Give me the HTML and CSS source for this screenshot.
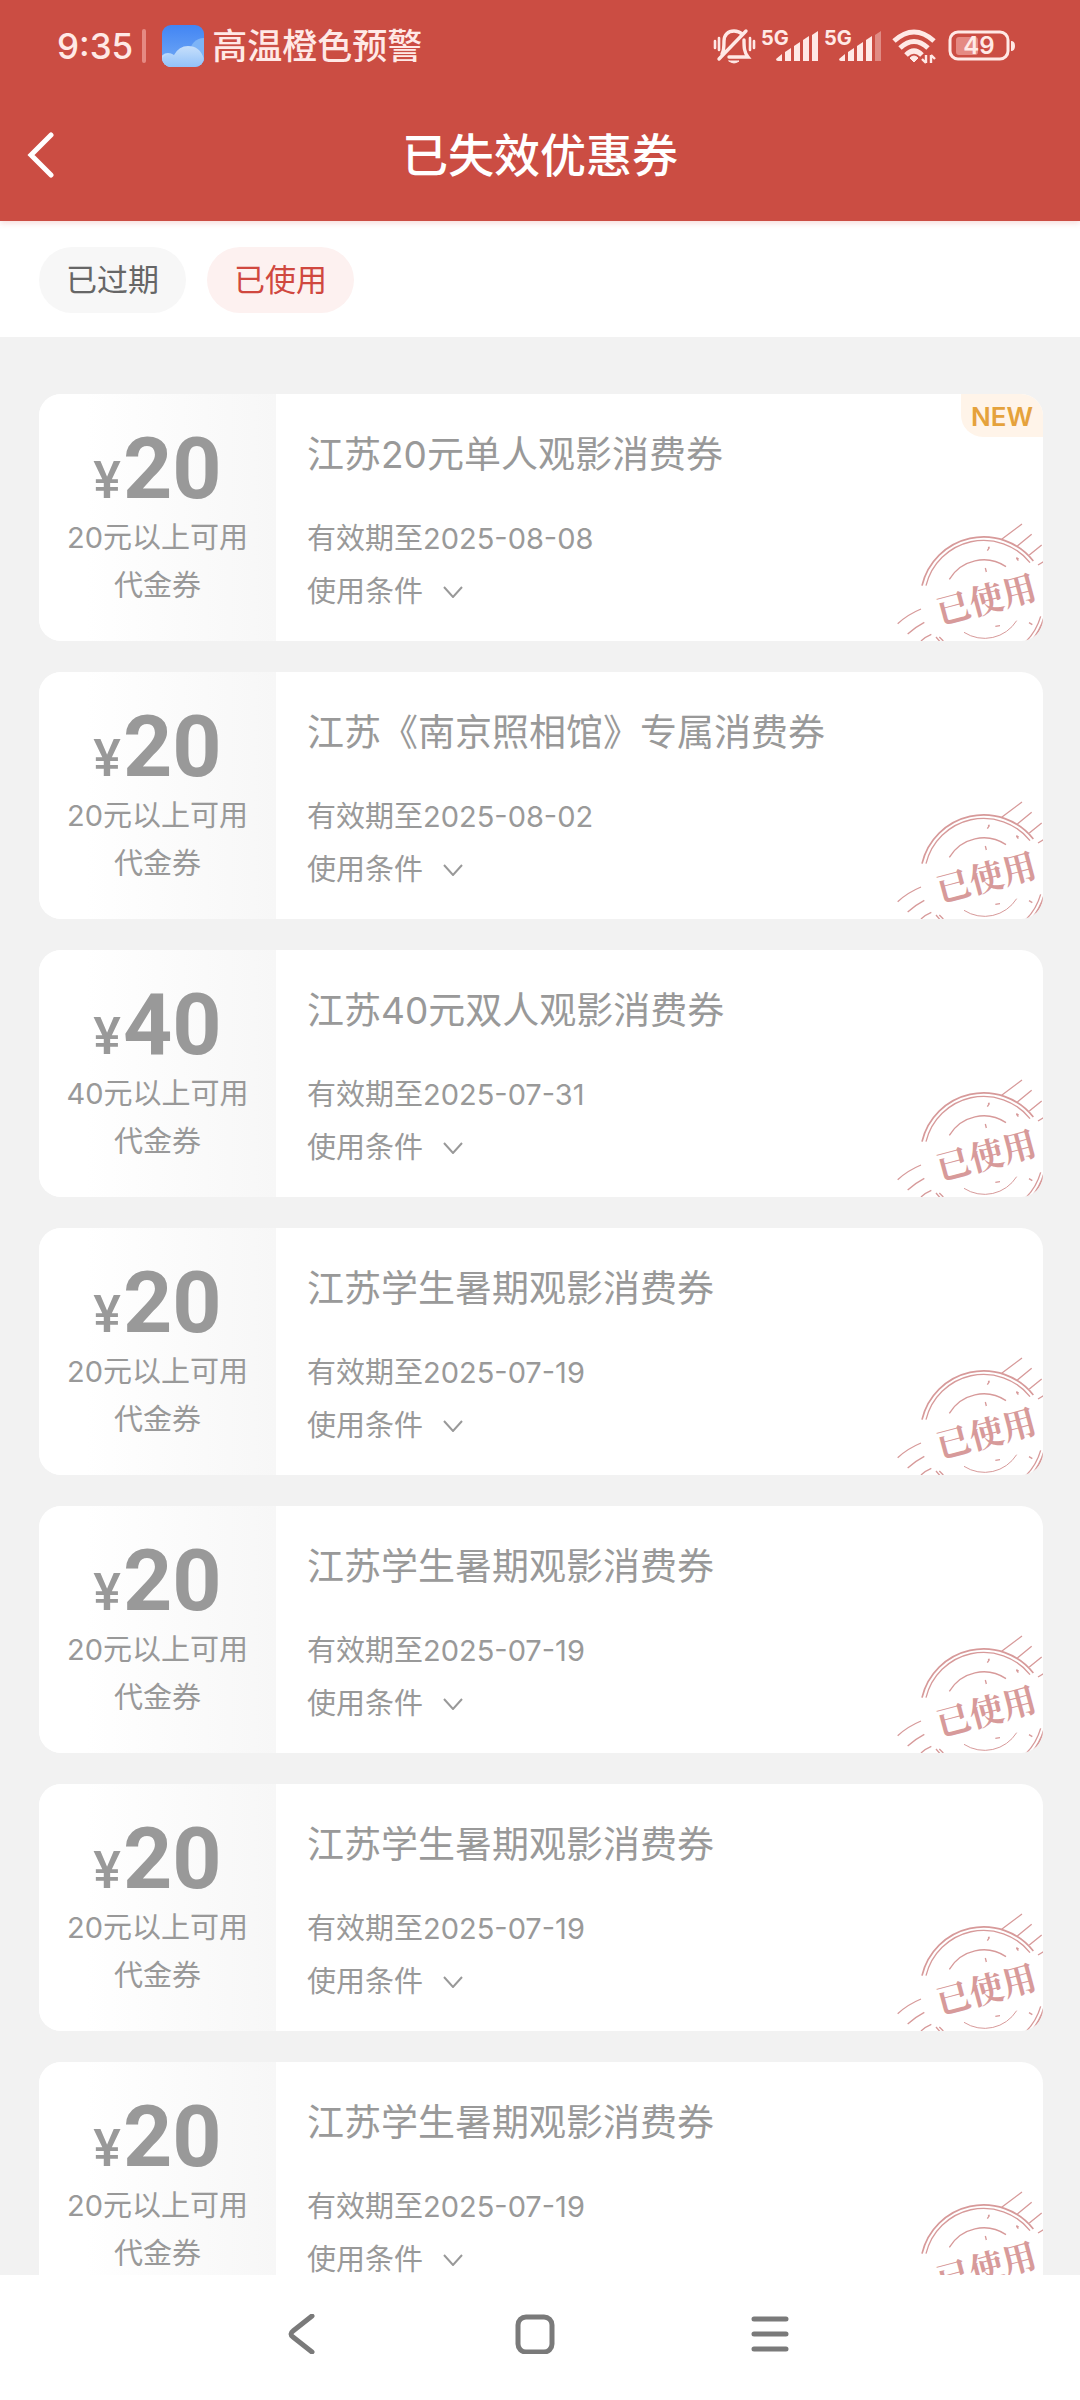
FILE: index.html
```html
<!DOCTYPE html>
<html lang="zh-CN">
<head>
<meta charset="UTF-8">
<meta name="viewport" content="width=device-width, initial-scale=1.0">
<title>已失效优惠券</title>
<link rel="stylesheet" href="styles.css">
</head>
<body>

<!-- 公用图形 -->
<svg class="defs" width="0" height="0" aria-hidden="true">
	<symbol id="down" viewBox="0 0 20 12"><path d="M1 1l9 10 9-10" fill="none" stroke="#999" stroke-width="2"/></symbol>
	<symbol id="stamp" viewBox="0 0 489 423">
		<g fill="none" stroke="#d79a9a" stroke-width="5">
			<path d="M126 257A190 190 0 0 1 460 183"/>
			<path d="M138 257A178 178 0 0 1 450 188" stroke-width="4"/>
			<path d="M494 345A190 190 0 0 1 446 432"/>
			<path d="M482 349A178 178 0 0 1 430 432" stroke-width="4"/>
			<path d="M208 238A120 120 0 0 1 378 200" stroke-width="4"/>
			<path d="M252 397A114 114 0 0 0 410 362" stroke-width="3"/>
			<path d="M365 118l61-46M412 138l43-35M448 165l37-30M474 195l18-11" stroke-width="4"/>
			<path d="M53 371Q84 343 123 327M83 402Q106 381 133 367M123 423Q137 410 154 403" stroke-width="4"/>
			<path d="M168 411l12 14M178 411l12 12M322 152l6-9M324 143l5-2M409 174l6 8M409 173l7 4M316 204l3 12M346 379l14-2M447 368l10 6" stroke-width="4"/>
		</g>
		<text class="stamp-text" x="320" y="336" text-anchor="middle" transform="rotate(-15 320 302)">已使用</text>
	</symbol>
</svg>

<header class="header">
	<div class="status">
		<span class="time">9:35</span>
		<i class="line"></i>
		<svg class="weather" width="42" height="42" viewBox="0 0 42 42">
			<defs>
				<linearGradient id="sky" x1="0" y1="0" x2="0" y2="1"><stop offset="0" stop-color="#4285f4"/><stop offset="1" stop-color="#74abf5"/></linearGradient>
				<linearGradient id="cloud" x1="0" y1="0" x2="0" y2="1"><stop offset="0" stop-color="#c6dffb"/><stop offset="1" stop-color="#93c2f9"/></linearGradient>
				<clipPath id="round"><rect width="42" height="42" rx="9"/></clipPath>
			</defs>
			<g clip-path="url(#round)">
				<rect width="42" height="42" fill="url(#sky)"/>
				<circle cx="42" cy="27" r="14" fill="#7db4f7"/>
				<circle cx="6" cy="36" r="8" fill="#b9d8fb"/>
				<path d="M0 42V33q6-6 12-3 5-9 14-9 12 0 16 13v8z" fill="url(#cloud)"/>
			</g>
		</svg>
		<span class="alert">高温橙色预警</span>
		<span class="icons">
			<svg width="43" height="38" viewBox="0 0 43 38" fill="none" stroke="#ffe9e6" stroke-width="3.4" stroke-linecap="round">
				<path d="M9 27C11 24 11 20 11 14C11 8 15 4 21 4Q26 4 29 7M31 13C31 20 31 25 35 30H16M6 32L33 4"/>
				<path d="M2 14v7M6 11v12M37 11v12M41 14v7" stroke-width="2.6"/>
				<path d="M16 34h10q-5 4-10 0z" fill="#ffe9e6" stroke-width="1"/>
			</svg>
			<svg width="58" height="46" viewBox="0 -6 58 46" fill="#ffe9e6">
				<text class="net" x="0" y="16">5G</text>
				<path d="M15 30l6-5v7h-4q-2 0-2-2zM24 23l6-4v13h-6zM33 17l6-4v19h-6zM42 11l6-4v25h-6zM51 6l6-4v30h-6z"/>
			</svg>
			<svg width="58" height="46" viewBox="0 -6 58 46" fill="#ffe9e6">
				<text class="net" x="0" y="16">5G</text>
				<path d="M15 30l6-5v7h-4q-2 0-2-2zM24 23l6-4v13h-6zM33 17l6-4v19h-6zM42 11l6-4v25h-6z"/>
				<path d="M51 6l6-4v30h-6z" opacity=".4"/>
			</svg>
			<svg class="wifi" width="44" height="36" viewBox="0 0 44 36" fill="none" stroke="#ffe9e6" stroke-width="5">
				<path d="M2 13Q22-5 42 13M8 20Q22 7 36 20M14 27Q22 19 30 27"/>
				<path d="M18 30q4-4 8 0l-4 4z" fill="#ffe9e6" stroke-width="1"/>
				<path d="M34 27v8M39 27v8M30 31l4 4M39 27l4 4" stroke-width="2.4"/>
			</svg>
			<svg class="battery" width="68" height="32" viewBox="0 0 68 32">
				<rect x="8" y="7" width="22" height="18" rx="3" fill="#e58a83"/>
				<rect x="2" y="2" width="58" height="27" rx="8" fill="none" stroke="#ffe9e6" stroke-width="3"/>
				<path d="M63 11q4 0 4 5t-4 5z" fill="#ffe9e6"/>
				<text x="31" y="24" text-anchor="middle">49</text>
			</svg>
		</span>
	</div>
	<div class="title-bar">
		<button class="back" type="button" aria-label="返回">
			<svg width="28" height="46" viewBox="0 0 28 46"><path d="M25 3L5 23l20 20" fill="none" stroke="#fff" stroke-width="5" stroke-linecap="round"/></svg>
		</button>
		<h1>已失效优惠券</h1>
	</div>
</header>

<nav class="tabs">
	<button type="button">已过期</button>
	<button type="button" class="on">已使用</button>
</nav>

<main class="list">
	<article class="card">
		<div class="left">
			<p class="price"><small>¥</small>20</p>
			<p>20元以上可用</p>
			<p>代金券</p>
		</div>
		<div class="right">
			<h2>江苏20元单人观影消费券</h2>
			<p>有效期至2025-08-08</p>
			<button type="button">使用条件<svg width="20" height="12"><use href="#down"/></svg></button>
		</div>
		<span class="new">NEW</span>
		<svg class="stamp"><use href="#stamp"/></svg>
	</article>

	<article class="card">
		<div class="left">
			<p class="price"><small>¥</small>20</p>
			<p>20元以上可用</p>
			<p>代金券</p>
		</div>
		<div class="right">
			<h2>江苏《南京照相馆》专属消费券</h2>
			<p>有效期至2025-08-02</p>
			<button type="button">使用条件<svg width="20" height="12"><use href="#down"/></svg></button>
		</div>
		<svg class="stamp"><use href="#stamp"/></svg>
	</article>

	<article class="card">
		<div class="left">
			<p class="price"><small>¥</small>40</p>
			<p>40元以上可用</p>
			<p>代金券</p>
		</div>
		<div class="right">
			<h2>江苏40元双人观影消费券</h2>
			<p>有效期至2025-07-31</p>
			<button type="button">使用条件<svg width="20" height="12"><use href="#down"/></svg></button>
		</div>
		<svg class="stamp"><use href="#stamp"/></svg>
	</article>

	<article class="card">
		<div class="left">
			<p class="price"><small>¥</small>20</p>
			<p>20元以上可用</p>
			<p>代金券</p>
		</div>
		<div class="right">
			<h2>江苏学生暑期观影消费券</h2>
			<p>有效期至2025-07-19</p>
			<button type="button">使用条件<svg width="20" height="12"><use href="#down"/></svg></button>
		</div>
		<svg class="stamp"><use href="#stamp"/></svg>
	</article>

	<article class="card">
		<div class="left">
			<p class="price"><small>¥</small>20</p>
			<p>20元以上可用</p>
			<p>代金券</p>
		</div>
		<div class="right">
			<h2>江苏学生暑期观影消费券</h2>
			<p>有效期至2025-07-19</p>
			<button type="button">使用条件<svg width="20" height="12"><use href="#down"/></svg></button>
		</div>
		<svg class="stamp"><use href="#stamp"/></svg>
	</article>

	<article class="card">
		<div class="left">
			<p class="price"><small>¥</small>20</p>
			<p>20元以上可用</p>
			<p>代金券</p>
		</div>
		<div class="right">
			<h2>江苏学生暑期观影消费券</h2>
			<p>有效期至2025-07-19</p>
			<button type="button">使用条件<svg width="20" height="12"><use href="#down"/></svg></button>
		</div>
		<svg class="stamp"><use href="#stamp"/></svg>
	</article>

	<article class="card">
		<div class="left">
			<p class="price"><small>¥</small>20</p>
			<p>20元以上可用</p>
			<p>代金券</p>
		</div>
		<div class="right">
			<h2>江苏学生暑期观影消费券</h2>
			<p>有效期至2025-07-19</p>
			<button type="button">使用条件<svg width="20" height="12"><use href="#down"/></svg></button>
		</div>
		<svg class="stamp"><use href="#stamp"/></svg>
	</article>
</main>

<!-- 系统导航键 -->
<footer class="sys-nav">
	<button type="button" aria-label="返回"><svg width="40" height="40" viewBox="0 0 40 40"><path d="M31 2L12 17q-4 3 0 6l19 15"/></svg></button>
	<button type="button" aria-label="主页"><svg width="40" height="40" viewBox="0 0 40 40"><rect x="3" y="3" width="34" height="35" rx="8"/></svg></button>
	<button type="button" aria-label="菜单"><svg width="40" height="40" viewBox="0 0 40 40"><path d="M4 5h32M4 20h32M4 35h32"/></svg></button>
</footer>

</body>
</html>
```
FILE: styles.css
```css
*{box-sizing:border-box;}
body,h1,h2,p{margin:0;padding:0;}
body{display:flex;flex-direction:column;height:100vh;overflow:hidden;background:#f2f2f2;color:#999;font:400 29px/48px Inter,"Noto Sans CJK SC",sans-serif;}
button{border:0;padding:0;background:none;color:inherit;font:inherit;cursor:pointer;}
svg{flex:none;}
.defs{position:absolute;}

/* 顶部 */
.header{flex:none;position:relative;background:#cb4d43;color:#fff;box-shadow:0 2px 6px rgba(203,77,67,.2);}
.status{display:flex;align-items:center;height:90px;padding:2px 64px 0 57px;color:#ffe9e6;}
.time{font-size:35px;font-weight:500;}
.line{width:4px;height:34px;margin:0 16px 0 9px;border-radius:2px;background:#e58a83;}
.alert{margin-left:8px;font-size:35px;font-weight:500;}
.icons{display:flex;align-items:center;gap:5px;margin-left:auto;}
.net{font:700 20px Inter,sans-serif;}
.wifi{margin-left:5px;}
.battery{margin-left:7px;}
.battery text{font:600 24px Inter,sans-serif;fill:#ffe9e6;}
.title-bar{display:grid;grid-template-columns:80px 1fr 80px;align-items:center;height:131px;padding-bottom:2px;}
.back{display:flex;align-items:center;height:90px;padding-left:26px;}
.title-bar h1{font-size:46px;font-weight:500;line-height:60px;text-align:center;}

/* 筛选 */
.tabs{flex:none;display:flex;gap:21px;padding:26px 39px 24px;background:#fff;}
.tabs button{height:66px;padding:0 27px;border-radius:33px;background:#f7f7f7;color:#666;font-size:31px;}
.tabs .on{background:#fdf1f0;color:#d0483f;}

/* 优惠券 */
.list{flex:1;min-height:0;display:flex;flex-direction:column;gap:31px;padding:57px 37px 31px 39px;overflow-y:auto;scrollbar-width:none;}
.card{flex:none;position:relative;display:flex;border-radius:22px;background:#fff;overflow:hidden;}
.left{width:237px;padding:30px 0 31px;background:linear-gradient(90deg,#fff 20%,#f7f7f7);text-align:center;}
.left .price{display:flex;justify-content:center;align-items:baseline;height:90px;font:700 86px/90px Roboto,sans-serif;}
.price small{margin-right:2px;font:500 52px/52px Roboto,sans-serif;}
.right{flex:1;padding:34px 33px 23px 31px;}
.right h2{margin-bottom:30px;font-size:37px;font-weight:400;line-height:54px;}
.right p{line-height:53px;}
.right button{display:flex;align-items:center;gap:20px;line-height:53px;}
.new{position:absolute;top:0;right:0;padding:2px 10px 0;border-radius:0 0 0 22px;background:#fff4e9;color:#e5a23c;font-size:26px;font-weight:600;line-height:41px;}
.stamp{position:absolute;right:0;bottom:0;width:163px;height:141px;}
.stamp-text{fill:#d79a9a;font:700 102px "Noto Serif CJK SC","Noto Sans CJK SC",serif;}

/* 底部 */
.sys-nav{flex:none;display:grid;grid-template-columns:repeat(3,1fr);height:125px;padding:0 193px 8px 184px;background:#fff;}
.sys-nav button{display:flex;align-items:center;justify-content:center;}
.sys-nav svg{fill:none;stroke:#7a7a7a;stroke-width:5;stroke-linecap:round;}
```
